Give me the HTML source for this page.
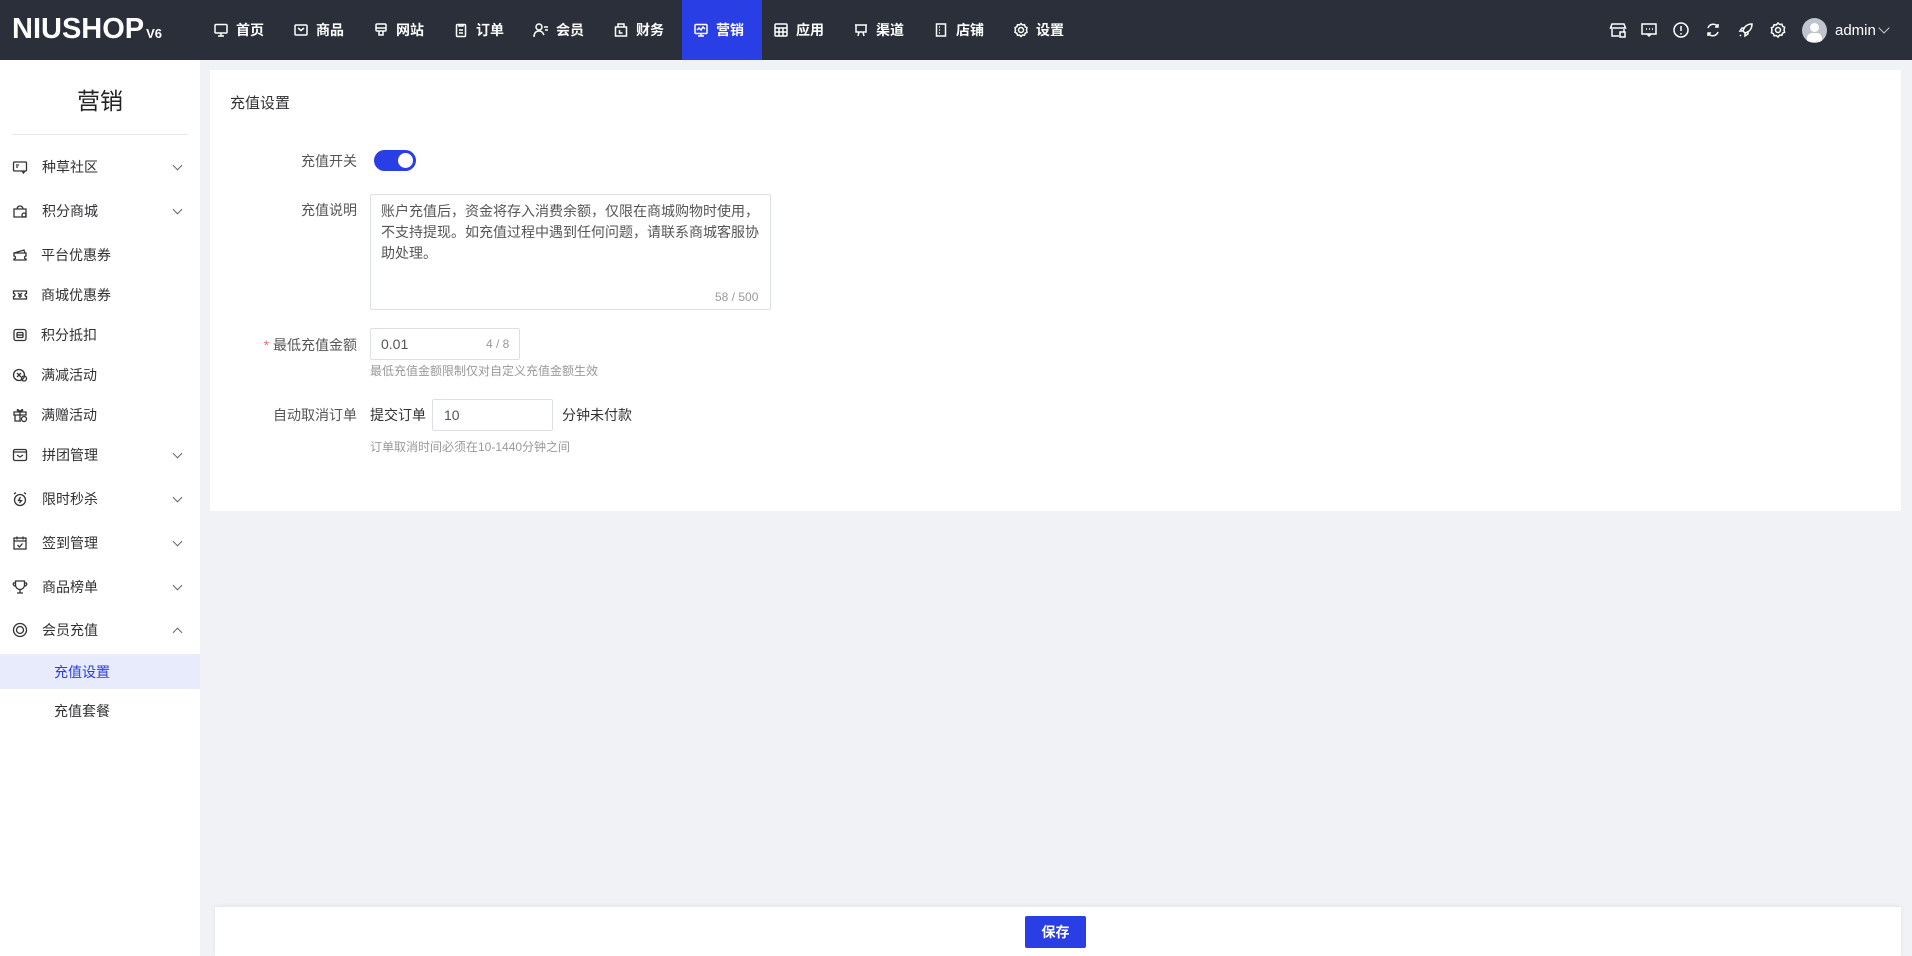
<!DOCTYPE html>
<html><head><meta charset="utf-8"><style>
*{box-sizing:border-box;margin:0;padding:0}
body{width:1912px;height:956px;overflow:hidden;background:#f0f2f5;font-family:"Liberation Sans","Noto Sans CJK SC",sans-serif;font-size:14px;color:#303133;position:relative}
.hd{position:absolute;left:0;top:0;width:1912px;height:60px;background:#2b2f3a;color:#fff}
.logo{position:absolute;left:12px;top:13px;font-size:29px;font-weight:bold;letter-spacing:0px;color:#fff;font-family:"Liberation Sans",sans-serif}
.logo small{font-size:13px;margin-left:2px}
.nav{position:absolute;left:202px;top:0;height:60px;display:flex}
.nav div{width:80px;height:60px;display:flex;align-items:center;padding-left:11px;font-size:14px;font-weight:bold}
.nav div.on{background:#2a3ee6}
.nav svg{width:16px;height:16px;margin-right:7px;fill:none;stroke:#fff;stroke-width:1.5}
.rt{position:absolute;top:0;height:60px;display:flex;align-items:center}
.rt svg{width:18px;height:18px;fill:none;stroke:#fff;stroke-width:1.5}
.side{position:absolute;left:0;top:60px;width:200px;height:896px;background:#fff}
.side h1{font-size:23px;font-weight:normal;text-align:center;margin-top:22px;height:31px;color:#222}
.side hr{border:0;border-top:1px solid #e8e8e8;margin:21px 12px 0 12px}
.mi{position:absolute;left:0;width:200px;height:36px;display:flex;align-items:center;font-size:14px;color:#303133}
.mi svg{position:absolute;left:12px;width:16px;height:16px;fill:none;stroke:#333;stroke-width:1.3}
.mi span{position:absolute;left:42px}
.mi .ch{position:absolute;left:174px;width:7px;height:7px;border-right:1px solid #666;border-bottom:1px solid #666;transform:rotate(45deg);margin-top:-4px}
.mi .up{transform:rotate(-135deg);margin-top:4px}
.card{position:absolute;left:210px;top:70px;width:1691px;height:441px;background:#fff}
.lbl{position:absolute;width:150px;left:207px;text-align:right;font-size:14px;color:#555}
.help{position:absolute;font-size:12px;color:#999}
.inp{position:absolute;border:1px solid #dcdfe6;background:#fff;border-radius:2px}
.foot{position:absolute;left:215px;top:907px;width:1686px;height:49px;background:#fff;box-shadow:0 -1px 4px rgba(0,0,0,.06)}
.btn{position:absolute;left:1025px;top:916px;width:61px;height:32px;background:#2a3ee6;color:#fff;font-weight:bold;font-size:14px;display:flex;align-items:center;justify-content:center;border-radius:2px}
</style></head><body>
<div class="hd">
<div class="logo">NIUSHOP<small>V6</small></div>
<div class="nav">
<div><svg viewBox="0 0 16 16"><rect x="2" y="2.5" width="12" height="8.5" rx="1"/><path d="M8 11v3M5 14h6"/></svg>首页</div>
<div><svg viewBox="0 0 16 16"><rect x="2" y="3" width="12" height="10" rx="1"/><path d="M5 6l3 2.5L11 6"/></svg>商品</div>
<div><svg viewBox="0 0 16 16"><rect x="3" y="2" width="10" height="7" rx="1"/><path d="M3 6h10M6 9v4h4V9"/></svg>网站</div>
<div><svg viewBox="0 0 16 16"><rect x="3.5" y="2.5" width="9" height="12" rx="1"/><path d="M6 2v2h4V2M6 8h4M6 11h4"/></svg>订单</div>
<div><svg viewBox="0 0 16 16"><circle cx="6" cy="5" r="3"/><path d="M1 15c0-4 2-6 5-6s4 2 5 4M11 5h4M12 8h3"/></svg>会员</div>
<div><svg viewBox="0 0 16 16"><path d="M2.5 5h11v9h-11zM5 5V2h6v3M6.5 8v3h3"/></svg>财务</div>
<div class="on"><svg viewBox="0 0 16 16"><rect x="2" y="2.5" width="12" height="9" rx="1"/><path d="M4 8l2-2 2 2 2-3 2 2M8 11.5V14M5 14h6"/></svg>营销</div>
<div><svg viewBox="0 0 16 16"><rect x="2" y="2" width="12" height="12" rx="1"/><path d="M2 6h12M2 10h12M6 6v8M10 6v8"/></svg>应用</div>
<div><svg viewBox="0 0 16 16"><path d="M2 3h12M3 3v7h10V3M6 10l-1 4M10 10l1 4"/></svg>渠道</div>
<div><svg viewBox="0 0 16 16"><rect x="3.5" y="2" width="9" height="12"/><path d="M6 5h1M6 8h1M6 11h1"/></svg>店铺</div>
<div><svg viewBox="0 0 16 16"><circle cx="8" cy="8" r="2.5"/><path d="M8 1.5l1.5 1.5 2-.3.6 2 1.9 1L13.5 8l.5 2.3-1.9 1-.6 2-2-.3L8 14.5 6.5 13l-2 .3-.6-2-1.9-1L2.5 8 2 5.7l1.9-1 .6-2 2 .3z"/></svg>设置</div>
</div>
<div class="rt" style="left:1609px"><svg viewBox="0 0 18 18"><path d="M3 3h12l1.5 4h-15zM3 8v7h7M15 8v3M11 11h5v5h-5z"/></svg></div>
<div class="rt" style="left:1640px"><svg viewBox="0 0 18 18"><rect x="2" y="3" width="14" height="10"/><path d="M7 13l2 2 2-2M6 8h1M9 8h1M12 8h1"/></svg></div>
<div class="rt" style="left:1672px"><svg viewBox="0 0 18 18"><circle cx="9" cy="9" r="7"/><path d="M9 5v5M9 12v1.5"/></svg></div>
<div class="rt" style="left:1704px"><svg viewBox="0 0 18 18"><path d="M4 7a5.5 5.5 0 0 1 10-1M14 11a5.5 5.5 0 0 1-10 1M14 3v3h-3M4 15v-3h3"/></svg></div>
<div class="rt" style="left:1737px"><svg viewBox="0 0 18 18"><path d="M15 3c-5 0-8 3-9 7l2 2c4-1 7-4 7-9zM6 10l-3 0 2-3h3M8 12v3l3-2v-3M4 14l-1 1"/></svg></div>
<div class="rt" style="left:1769px"><svg viewBox="0 0 18 18"><circle cx="9" cy="9" r="2.5"/><path d="M9 2l1.7 1.5 2.2-.3.7 2.1 2 1L15 9l.6 2.2-2 1-.7 2.1-2.2-.3L9 16l-1.7-1.5-2.2.3-.7-2.1-2-1L3 9l-.6-2.2 2-1 .7-2.1 2.2.3z"/></svg></div>
<div class="rt" style="left:1802px"><div style="width:25px;height:25px;border-radius:50%;background:#c0c4cc;position:relative;overflow:hidden"><div style="position:absolute;left:8px;top:5px;width:9px;height:9px;border-radius:50%;background:#fff"></div><div style="position:absolute;left:5px;top:15px;width:15px;height:9px;border-radius:5px 5px 0 0;background:#fff"></div></div></div>
<div class="rt" style="left:1835px;font-size:15px">admin</div>
<div class="rt" style="left:1880px"><div style="width:8px;height:8px;border-right:1px solid #ccc;border-bottom:1px solid #ccc;transform:rotate(45deg);margin-top:-5px"></div></div>
</div>

<div class="side">
<h1>营销</h1><hr>
</div>
<div class="mi" style="top:149px"><svg viewBox="0 0 16 16"><rect x="1.5" y="3" width="13" height="9" rx="1"/><path d="M4 6h3M4 8h2M10 12l1.5 2 1.5-2"/></svg><span>种草社区</span><i class="ch"></i></div>
<div class="mi" style="top:193px"><svg viewBox="0 0 16 16"><path d="M2 14V6h12v8zM5 6a3 3 0 0 1 6 0"/><circle cx="12" cy="12" r="2"/></svg><span>积分商城</span><i class="ch"></i></div>
<div class="mi" style="top:237px"><svg viewBox="0 0 16 16"><path d="M2 6l10-3 1 3M2 6h12v3a1.5 1.5 0 0 0 0 3v1H2v-1a1.5 1.5 0 0 0 0-3z"/></svg><span style="left:41px">平台优惠券</span></div>
<div class="mi" style="top:277px"><svg viewBox="0 0 16 16"><path d="M1.5 4h13v2.5a1.5 1.5 0 0 0 0 3V12h-13V9.5a1.5 1.5 0 0 0 0-3zM6 6l2 2 2-2M8 8v3M6 9h4"/></svg><span style="left:41px">商城优惠券</span></div>
<div class="mi" style="top:317px"><svg viewBox="0 0 16 16"><rect x="2" y="2.5" width="12" height="11" rx="2"/><rect x="5" y="5.5" width="6" height="5" rx="1"/><path d="M5 8h6"/></svg><span style="left:41px">积分抵扣</span></div>
<div class="mi" style="top:357px"><svg viewBox="0 0 16 16"><circle cx="7" cy="8" r="5.5"/><circle cx="12" cy="11.5" r="2.5"/><path d="M5 6l4 4M9 6l-4 4"/></svg><span style="left:41px">满减活动</span></div>
<div class="mi" style="top:397px"><svg viewBox="0 0 16 16"><path d="M2 5h12v3H2zM3 8v6h6M8 5v9M8 5C6 1 3 3 8 5c5-2 2-4 0 0"/><circle cx="12" cy="12" r="2.5"/></svg><span style="left:41px">满赠活动</span></div>
<div class="mi" style="top:437px"><svg viewBox="0 0 16 16"><rect x="1.5" y="2.5" width="13" height="11" rx="1.5"/><path d="M1.5 5h13M5 8l3 2 3-2"/></svg><span>拼团管理</span><i class="ch"></i></div>
<div class="mi" style="top:481px"><svg viewBox="0 0 16 16"><circle cx="8" cy="9" r="5.5"/><path d="M8.5 6L6.5 9.5h3L7.5 12M2 3l2-1.5M14 3l-2-1.5"/></svg><span>限时秒杀</span><i class="ch"></i></div>
<div class="mi" style="top:525px"><svg viewBox="0 0 16 16"><rect x="2" y="3" width="12" height="11"/><path d="M5 1.5v3M11 1.5v3M2 6h12M5.5 10l2 2 3-3.5"/></svg><span>签到管理</span><i class="ch"></i></div>
<div class="mi" style="top:569px"><svg viewBox="0 0 16 16"><path d="M3.5 2h9v4a4.5 4.5 0 0 1-9 0zM8 10.5v3M5 14h6M3.5 4H1.5a2 2 0 0 0 2 3M12.5 4h2a2 2 0 0 1-2 3"/></svg><span>商品榜单</span><i class="ch"></i></div>
<div class="mi" style="top:612px"><svg viewBox="0 0 16 16"><circle cx="8" cy="8" r="6.5"/><circle cx="8" cy="8" r="3.5"/></svg><span>会员充值</span><i class="ch up"></i></div>
<div class="mi" style="top:654px;height:35px;background:#e8ebfc;color:#2a3ee6"><span style="left:54px">充值设置</span></div>
<div class="mi" style="top:693px"><span style="left:54px">充值套餐</span></div>

<div class="card"></div>
<div style="position:absolute;left:230px;top:92px;font-size:15px;color:#303133">充值设置</div>
<div class="lbl" style="top:151px">充值开关</div>
<div style="position:absolute;left:374px;top:150px;width:42px;height:21px;border-radius:11px;background:#2a3ee6"><div style="position:absolute;right:3px;top:3px;width:15px;height:15px;border-radius:50%;background:#fff"></div></div>
<div class="lbl" style="top:200px">充值说明</div>
<div class="inp" style="left:370px;top:194px;width:401px;height:116px"></div>
<div style="position:absolute;left:381px;top:201px;width:385px;font-size:14px;line-height:21px;color:#555">账户充值后，资金将存入消费余额，仅限在商城购物时使用，不支持提现。如充值过程中遇到任何问题，请联系商城客服协助处理。</div>
<div style="position:absolute;left:715px;top:290px;font-size:12px;color:#999">58 / 500</div>
<div class="lbl" style="top:335px"><span style="color:#f56c6c">* </span>最低充值金额</div>
<div class="inp" style="left:370px;top:328px;width:150px;height:32px"></div>
<div style="position:absolute;left:381px;top:336px;font-size:14px;color:#555">0.01</div>
<div style="position:absolute;left:486px;top:337px;font-size:12px;color:#999">4 / 8</div>
<div class="help" style="left:370px;top:362px">最低充值金额限制仅对自定义充值金额生效</div>
<div class="lbl" style="top:405px">自动取消订单</div>
<div style="position:absolute;left:370px;top:405px;font-size:14px;color:#303133">提交订单</div>
<div class="inp" style="left:432px;top:399px;width:121px;height:32px"></div>
<div style="position:absolute;left:444px;top:407px;font-size:14px;color:#555">10</div>
<div style="position:absolute;left:562px;top:405px;font-size:14px;color:#303133">分钟未付款</div>
<div class="help" style="left:370px;top:438px">订单取消时间必须在10-1440分钟之间</div>

<div class="foot"></div>
<div class="btn">保存</div>
</body></html>
